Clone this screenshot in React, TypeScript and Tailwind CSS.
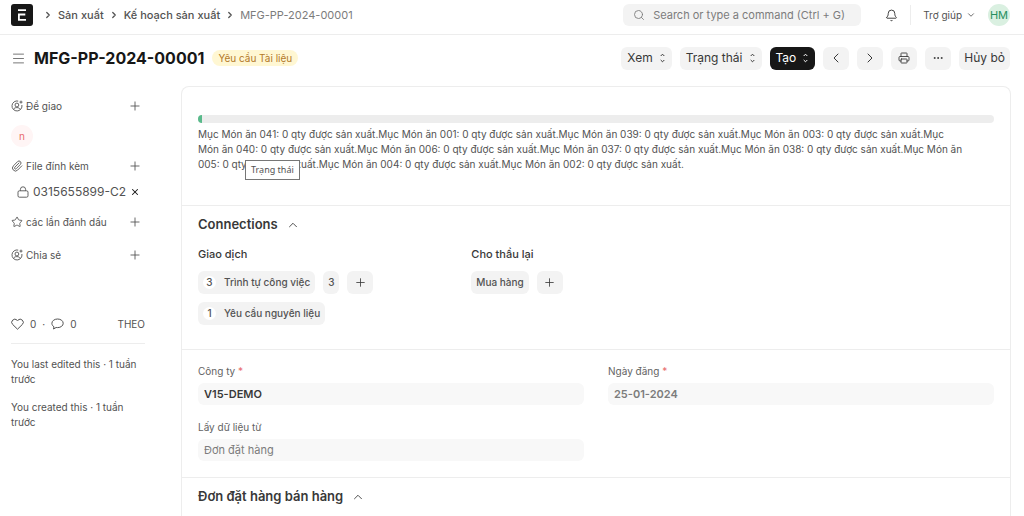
import type { ReactNode } from 'react';
import {
    Bell,
    ChevronDown,
    ChevronLeft,
    ChevronRight,
    ChevronUp,
    Ellipsis,
    Menu,
    Paperclip,
    Plus,
    Printer,
    Search,
    Star,
    X,
} from 'lucide-react';

const items = ['041', '001', '039', '003', '040', '006', '037', '038', '005', '004', '002'];

function SortIcon() {
    return (
        <svg width="7" height="10" viewBox="0 0 7 10" fill="none" stroke="currentColor">
            <path d="M1.7 3 3.500 1.200 5.300 3M1.700 7l1.800 1.800L5.300 7" />
        </svg>
    );
}

function AssignIcon() {
    return (
        <svg width="12" height="12" viewBox="0 0 12 12" fill="none" stroke="currentColor" strokeWidth="0.9">
            <path d="M7.2 1.1A5 5 0 1 0 10.9 5" />
            <path d="M2.6 9.6c.5-1.5 1.5-2 3.2-2s2.8.5 3.3 2" />
            <circle cx="5.9" cy="5" r="1.9" />
            <path d="M10 .6v3M8.5 2.1h3" />
        </svg>
    );
}

function LockIcon() {
    return (
        <svg width="12" height="12" viewBox="0 0 12 12" fill="none" stroke="currentColor" strokeWidth="0.9">
            <rect x="1" y="4.8" width="10" height="6.4" rx="1.4" />
            <path d="M3.4 4.8V3.400a2.600 2.600 0 0 1 5.200 0v1.400" />
        </svg>
    );
}

function HeartIcon() {
    return (
        <svg width="13" height="12" viewBox="0 0 13 12" fill="none" stroke="currentColor" strokeLinejoin="round">
            <path d="M6.5 11.2 1.7 6.5a3 3 0 0 1 0-4.4 3.1 3.1 0 0 1 4.3 0l.5.5.5-.5a3.1 3.1 0 0 1 4.3 0 3 3 0 0 1 0 4.4z" />
        </svg>
    );
}

function CommentIcon() {
    return (
        <svg width="13" height="12" viewBox="0 0 13 12" fill="none" stroke="currentColor" strokeLinejoin="round">
            <path d="M6.6 1C3.4 1 .9 2.9.9 5.3c0 1.5.8 2.7 2.1 3.5L2.5 11l2.6-1.5c.5.1 1 .1 1.5.1 3.2 0 5.6-1.9 5.6-4.3S9.8 1 6.6 1z" />
        </svg>
    );
}

interface ISideRow {
    icon: ReactNode;
    label: string;
}

function SideRow({ icon, label }: ISideRow) {
    return (
        <div className="flex items-center h-4 gap-[3px] pr-[3px]">
            {icon}
            <span className="flex-1">{label}</span>
            <button aria-label={`Thêm ${label}`}>
                <Plus size={14} strokeWidth={1.5} />
            </button>
        </div>
    );
}

function HeadButton({ label, dark }: { label: string; dark?: boolean }) {
    return (
        <button
            className={`flex items-center h-[23px] gap-1.5 px-1.5 rounded-md text-[12px] ${
                dark ? 'bg-[#171717] text-white' : 'bg-[#f3f3f3] text-[#383838]'
            }`}
        >
            {label}
            <SortIcon />
        </button>
    );
}

function IconButton({ label, children }: { label: string; children: ReactNode }) {
    return (
        <button
            aria-label={label}
            className="flex items-center justify-center w-[26px] h-[23px] rounded-md bg-[#f3f3f3] text-[#383838]"
        >
            {children}
        </button>
    );
}

function DocBadge({ label, count }: { label: string; count?: number }) {
    return (
        <button className="flex items-center h-[23px] gap-2 px-[5px] rounded-md bg-[#f3f3f3] text-[10px] font-medium">
            {count && (
                <span className="flex items-center justify-center w-[13px] h-[13px] rounded-full bg-white">
                    {count}
                </span>
            )}
            {label}
        </button>
    );
}

interface IField {
    id: string;
    label: string;
    value: string;
    required?: boolean;
    className: string;
}

function Field({ id, label, value, required, className }: IField) {
    return (
        <div>
            <label htmlFor={id} className="block h-4 mb-1 leading-4 text-[10px] text-[#636363]">
                {label}
                {required && <span className="text-[#e86c6c]"> *</span>}
            </label>
            <input
                id={id}
                readOnly
                defaultValue={value}
                className={`block w-full h-[22px] px-1.5 rounded-md bg-[#f8f8f8] outline-none ${className}`}
            />
        </div>
    );
}

function SectionTitle({ title }: { title: string }) {
    return (
        <h2 className="text-[13px] leading-5 font-semibold text-[#383838]">
            <button className="flex items-center gap-2">
                {title}
                <ChevronUp size={14} strokeWidth={1.5} className="mt-0.5" />
            </button>
        </h2>
    );
}

export default function App() {
    return (
        <div className="flex flex-col min-h-screen bg-white font-['Inter',sans-serif] text-[11px] text-[#525252]">
            <header className="flex items-center h-[35px] pb-1 pl-[11px] pr-3.5 border-b border-[#ededed]">
                <a href="#home" aria-label="Home">
                    <svg width="22" height="22" viewBox="0 0 22 22">
                        <rect width="22" height="22" rx="3" fill="#171717" />
                        <path d="M7 6.2h8M14.3 10.5H7.9v5.3H15" fill="none" stroke="#fff" strokeWidth="1.8" />
                    </svg>
                </a>
                <nav className="flex items-center gap-[5px] ml-2.5 font-medium">
                    <ChevronRight size={10} strokeWidth={3} />
                    <a href="#manufacturing">Sản xuất</a>
                    <ChevronRight size={10} strokeWidth={3} />
                    <a href="#plan">Kế hoạch sản xuất</a>
                    <ChevronRight size={10} strokeWidth={3} />
                    <span className="font-normal text-[#7c7c7c]">MFG-PP-2024-00001</span>
                </nav>
                <label className="flex items-center w-[238px] h-[22px] gap-2 px-2.5 ml-auto rounded-md bg-[#f3f3f3] text-[#7c7c7c]">
                    <Search size={12} strokeWidth={1.75} />
                    <input
                        type="text"
                        aria-label="Search"
                        placeholder="Search or type a command (Ctrl + G)"
                        className="flex-1 min-w-0 outline-none placeholder:text-[#7c7c7c]"
                    />
                </label>
                <button aria-label="Thông báo" className="ml-6 mr-3">
                    <Bell size={13} strokeWidth={1.75} className="text-[#383838]" />
                </button>
                <button className="flex items-center h-5 gap-1 pl-3 border-l border-[#ededed] text-[10px]">
                    Trợ giúp
                    <ChevronDown size={10} strokeWidth={2} />
                </button>
                <button className="w-[22px] h-[22px] ml-3 rounded-full bg-[#daf0e1] text-[#278f5e]">HM</button>
            </header>

            <div className="flex items-center h-[46px] gap-2 pl-[11px] pr-3.5">
                <button aria-label="Menu">
                    <Menu size={15} strokeWidth={1.25} />
                </button>
                <h1 className="text-[16px] font-bold text-[#171717]">MFG-PP-2024-00001</h1>
                <span className="h-4 px-1.5 leading-4 rounded-full bg-[#fff7d3] text-[10px] text-[#b3792a]">
                    Yêu cầu Tài liệu
                </span>
                <div className="flex gap-2 ml-auto">
                    <HeadButton label="Xem" />
                    <HeadButton label="Trạng thái" />
                    <HeadButton label="Tạo" dark />
                    <IconButton label="Trước">
                        <ChevronLeft size={16} strokeWidth={1.5} />
                    </IconButton>
                    <IconButton label="Sau">
                        <ChevronRight size={16} strokeWidth={1.5} />
                    </IconButton>
                    <IconButton label="In">
                        <Printer size={12} strokeWidth={1.75} />
                    </IconButton>
                    <IconButton label="Thêm">
                        <Ellipsis size={12} />
                    </IconButton>
                    <button className="h-[23px] px-[5px] rounded-md bg-[#f3f3f3] text-[12px] text-[#383838]">Hủy bỏ</button>
                </div>
            </div>

            <div className="flex flex-1 pl-[11px] pr-[13px] pt-[5px]">
                <aside className="shrink-0 w-[134px] mr-9 pt-3 text-[10px]">
                    <SideRow icon={<AssignIcon />} label="Để giao" />
                    <div className="flex items-center justify-center w-[22px] h-[22px] my-[11px] rounded-full bg-[#fff5f5] text-[#e86c6c]">
                        n
                    </div>
                    <SideRow icon={<Paperclip size={12} strokeWidth={1.75} />} label="File đính kèm" />
                    <div className="flex items-center h-4 gap-1 my-[10px] pl-1.5 text-[12px] whitespace-nowrap">
                        <LockIcon />
                        <a href="#file">0315655899-C2</a>
                        <button aria-label="Xóa file">
                            <X size={10} strokeWidth={2.5} className="text-[#171717]" />
                        </button>
                    </div>
                    <div className="flex flex-col gap-[17px] pt-1">
                        <SideRow icon={<Star size={12} strokeWidth={1.75} />} label="các lần đánh dấu" />
                        <SideRow icon={<AssignIcon />} label="Chia sẻ" />
                    </div>
                    <div className="flex items-center gap-1.5 mt-[53px] pb-[11px] border-b border-[#ededed] leading-4">
                        <HeartIcon />
                        <span>0</span>
                        <span>·</span>
                        <CommentIcon />
                        <span>0</span>
                        <button className="ml-auto">THEO</button>
                    </div>
                    <p className="mt-[13px] leading-[15px]">You last edited this · 1 tuần trước</p>
                    <p className="mt-[13px] leading-[15px]">You created this · 1 tuần trước</p>
                </aside>

                <main className="flex-1 min-w-0 border border-b-0 border-[#ededed] rounded-t-lg">
                    <section className="relative px-4 pt-7 pb-[33px] border-b border-[#ededed]">
                        <div className="h-2 mb-1 rounded-full bg-[#ededed] overflow-hidden">
                            <div className="w-1 h-full bg-[#59ba8b]" />
                        </div>
                        <p className="pr-7 text-[10px] leading-[15px]">
                            {items.map((item) => `Mục Món ăn ${item}: 0 qty được sản xuất.`).join('')}
                        </p>
                        <div
                            role="tooltip"
                            className="absolute left-[63px] top-[73px] h-5 px-[5px] border border-[#767676] bg-white font-['Noto_Sans',sans-serif] text-[9px] leading-[18px]"
                        >
                            Trạng thái
                        </div>
                    </section>

                    <section className="px-4 pt-2 pb-6 border-b border-[#ededed]">
                        <SectionTitle title="Connections" />
                        <div className="grid grid-cols-3 gap-6 mt-3">
                            <div>
                                <h3 className="mb-[9px] leading-4 font-medium text-[#383838]">Giao dịch</h3>
                                <div className="flex gap-2 mb-2">
                                    <DocBadge label="Trình tự công việc" count={3} />
                                    <DocBadge label="3" />
                                    <IconButton label="Thêm trình tự công việc">
                                        <Plus size={13} strokeWidth={1.5} />
                                    </IconButton>
                                </div>
                                <DocBadge label="Yêu cầu nguyên liệu" count={1} />
                            </div>
                            <div>
                                <h3 className="mb-[9px] leading-4 font-medium text-[#383838]">Cho thầu lại</h3>
                                <div className="flex gap-2">
                                    <DocBadge label="Mua hàng" />
                                    <IconButton label="Thêm mua hàng">
                                        <Plus size={13} strokeWidth={1.5} />
                                    </IconButton>
                                </div>
                            </div>
                        </div>
                    </section>

                    <section className="grid grid-cols-2 gap-x-6 gap-y-3.5 px-4 pt-[13px] pb-4 border-b border-[#ededed]">
                        <Field id="company" label="Công ty" value="V15-DEMO" required className="font-semibold text-[#383838]" />
                        <Field id="date" label="Ngày đăng" value="25-01-2024" required className="font-semibold text-[#7c7c7c]" />
                        <Field id="source" label="Lấy dữ liệu từ" value="Đơn đặt hàng" className="text-[#7c7c7c]" />
                    </section>

                    <section className="px-4 pt-2 pb-2">
                        <SectionTitle title="Đơn đặt hàng bán hàng" />
                    </section>
                </main>
            </div>
        </div>
    );
}
